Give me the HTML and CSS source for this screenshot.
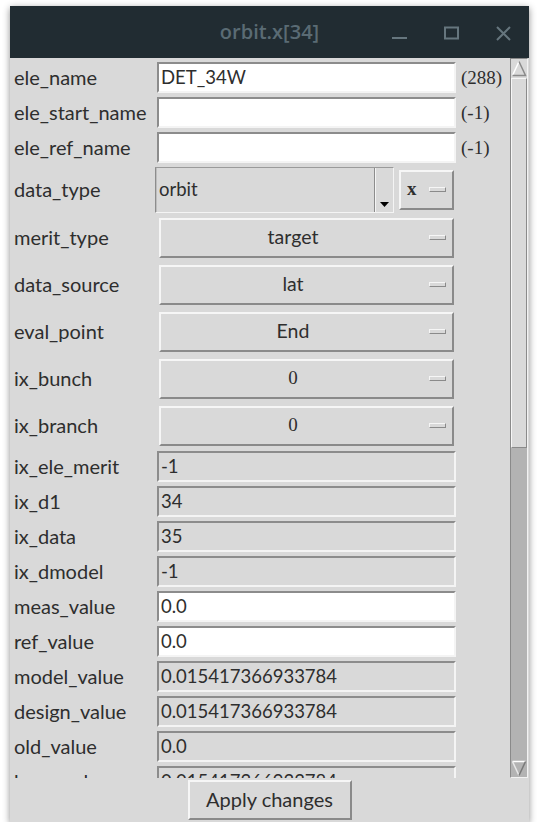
FILE: index.html
```html
<!DOCTYPE html>
<html>
<head>
<meta charset="utf-8">
<link rel="stylesheet" href="styles.css">
</head>
<body>
<div class="window">
  <div class="titlebar">
    <span></span>
    <span class="title">orbit.x[34]</span>
    <div class="controls">
      <svg class="ic" width="16" height="16" viewBox="0 0 16 16"><line x1="0" y1="12" x2="15" y2="12"/></svg>
      <svg class="ic" width="16" height="16" viewBox="0 0 16 16"><rect x="1" y="1.5" width="13" height="11"/></svg>
      <svg class="ic" width="16" height="16" viewBox="0 0 16 16"><path d="M1 1 L14 14 M14 1 L1 14"/></svg>
    </div>
  </div>
  <div class="content">
    <div class="pane">
      <div class="form">
        <div class="row r-entry"><span class="lbl">ele_name</span><div class="entry edit">DET_34W</div><span class="suffix">(288)</span></div>
        <div class="row r-entry"><span class="lbl">ele_start_name</span><div class="entry edit"></div><span class="suffix">(-1)</span></div>
        <div class="row r-entry"><span class="lbl">ele_ref_name</span><div class="entry edit"></div><span class="suffix">(-1)</span></div>
        <div class="row r-combo"><span class="lbl">data_type</span>
          <div class="combo-wrap">
            <div class="combo"><span class="combo-text">orbit</span><span class="combo-arrow"><svg width="9" height="5" viewBox="0 0 9 5"><path d="M0 0 H9 L4.5 5 Z" fill="#000"/></svg></span></div>
            <div class="mbtn small"><span class="mtext serif">x</span><span class="ind"></span></div>
          </div>
        </div>
        <div class="row r-btn"><span class="lbl">merit_type</span><div class="mbtn"><span class="mtext">target</span><span class="ind"></span></div></div>
        <div class="row r-btn"><span class="lbl">data_source</span><div class="mbtn"><span class="mtext">lat</span><span class="ind"></span></div></div>
        <div class="row r-btn"><span class="lbl">eval_point</span><div class="mbtn"><span class="mtext">End</span><span class="ind"></span></div></div>
        <div class="row r-btn"><span class="lbl">ix_bunch</span><div class="mbtn"><span class="mtext num">0</span><span class="ind"></span></div></div>
        <div class="row r-btn"><span class="lbl">ix_branch</span><div class="mbtn"><span class="mtext num">0</span><span class="ind"></span></div></div>
        <div class="row r-entry"><span class="lbl">ix_ele_merit</span><div class="entry ro">-1</div></div>
        <div class="row r-entry"><span class="lbl">ix_d1</span><div class="entry ro">34</div></div>
        <div class="row r-entry"><span class="lbl">ix_data</span><div class="entry ro">35</div></div>
        <div class="row r-entry"><span class="lbl">ix_dmodel</span><div class="entry ro">-1</div></div>
        <div class="row r-entry"><span class="lbl">meas_value</span><div class="entry edit">0.0</div></div>
        <div class="row r-entry"><span class="lbl">ref_value</span><div class="entry edit">0.0</div></div>
        <div class="row r-entry"><span class="lbl">model_value</span><div class="entry ro">0.015417366933784</div></div>
        <div class="row r-entry"><span class="lbl">design_value</span><div class="entry ro">0.015417366933784</div></div>
        <div class="row r-entry"><span class="lbl">old_value</span><div class="entry ro">0.0</div></div>
        <div class="row r-entry"><span class="lbl">base_value</span><div class="entry ro">0.015417366933784</div></div>
      </div>
      <div class="scrollbar">
        <div class="sb-up"><svg width="16" height="17" viewBox="0 0 16 17"><path d="M1.5 15.5 L8 1.5" stroke="#fff" stroke-width="1.5" fill="none"/><path d="M8 1.5 L14.5 15.5 H1.5" stroke="#8a8a8a" stroke-width="1.5" fill="none"/></svg></div>
        <div class="sb-thumb"></div>
        <div class="sb-trough"></div>
        <div class="sb-down"><svg width="16" height="17" viewBox="0 0 16 17"><path d="M1.5 1.5 H14.5" stroke="#fff" stroke-width="1.5" fill="none"/><path d="M1.5 1.5 L8 15.5" stroke="#e8e8e8" stroke-width="1.5" fill="none"/><path d="M14.5 1.5 L8 15.5" stroke="#7a7a7a" stroke-width="1.5" fill="none"/></svg></div>
      </div>
    </div>
    <div class="footer">
      <div class="apply">Apply changes</div>
    </div>
  </div>
</div>
</body>
</html>
```

FILE: styles.css
```css
* { box-sizing: border-box; }
body {
  margin: 0;
  background: #ffffff;
  font-family: Lato, "Open Sans", sans-serif;
}
.window {
  margin: 6px 0 0 10px;
  width: 519px;
  height: 816px;
  background: #d9d9d9;
  box-shadow: 0 2px 7px rgba(0, 0, 0, 0.45);
  display: flex;
  flex-direction: column;
}
.titlebar {
  height: 52px;
  flex: none;
  background: #212c32;
  display: grid;
  grid-template-columns: 1fr auto 1fr;
  align-items: center;
}
.title {
  font-family: "Open Sans", sans-serif;
  font-size: 20px;
  font-weight: 600;
  color: #5a6b74;
  padding-bottom: 2px;
}
.controls {
  justify-self: end;
  display: flex;
  align-items: center;
  gap: 36px;
  padding-right: 17px;
  padding-top: 3px;
}
.ic {
  stroke: #66767e;
  stroke-width: 2;
  fill: none;
}
.content {
  flex: 1;
  display: flex;
  flex-direction: column;
}
.pane {
  height: 720px;
  display: flex;
}
.form {
  width: 500px;
  overflow: hidden;
  padding-top: 2px;
}
.row {
  display: grid;
  grid-template-columns: 147px 299px 1fr;
  align-items: center;
  color: #2e2e2e;
  font-size: 18px;
}
.r-entry { height: 35px; }
.r-combo { height: 49px; }
.r-btn { height: 47px; }
.lbl {
  padding-left: 4px;
  padding-bottom: 2px;
  font-size: 20px;
  white-space: nowrap;
}
.entry {
  height: 31px;
  border: 2px solid;
  border-color: #8c8c8c #f4f4f4 #f4f4f4 #8c8c8c;
  padding-left: 2px;
  line-height: 26px;
  font-size: 18.5px;
  white-space: nowrap;
  overflow: hidden;
}
.edit { background: #ffffff; }
.ro { background: #d9d9d9; }
.suffix {
  font-family: "Liberation Serif", serif;
  font-size: 19px;
  padding-left: 5px;
}
.combo-wrap {
  display: flex;
  align-items: center;
  height: 100%;
}
.combo {
  margin-left: -2px;
  width: 239px;
  height: 46px;
  border: 1px solid;
  border-color: #9a9a9a #f4f4f4 #f4f4f4 #8c8c8c;
  box-shadow: inset 1px 0 0 #bdbdbd;
  display: flex;
  align-self: center;
}
.combo-text {
  flex: 1;
  padding-left: 3px;
  line-height: 42px;
  font-size: 18.5px;
}
.combo-arrow {
  width: 19px;
  border-left: 1px solid #8c8c8c;
  box-shadow: inset 1px 0 0 #f4f4f4;
  display: flex;
  align-items: flex-end;
  justify-content: center;
  padding-bottom: 5px;
}
.mbtn {
  margin-left: 2px;
  width: 295px;
  height: 40px;
  border: 2px solid;
  border-color: #f6f6f6 #8a8a8a #8a8a8a #f6f6f6;
  background: #d9d9d9;
  display: flex;
  align-items: center;
  font-size: 19.5px;
}
.mbtn.small {
  margin-left: 5px;
  width: 55px;
}
.mtext {
  flex: 1;
  text-align: center;
  padding-bottom: 2px;
}
.mbtn.small .mtext {
  text-align: left;
  padding-left: 6px;
}
.serif {
  font-family: "Liberation Serif", serif;
  font-weight: bold;
  font-size: 19px;
}
.num {
  font-family: "Liberation Serif", serif;
  font-size: 19px;
}
.ind {
  width: 17px;
  height: 5px;
  border: 1px solid;
  border-color: #f6f6f6 #8a8a8a #8a8a8a #f6f6f6;
  margin-right: 6px;
  margin-left: 4px;
}
.scrollbar {
  width: 18px;
  margin-right: 1px;
  border: 1px solid;
  border-color: #8a8a8a #f2f2f2 #f2f2f2 #8a8a8a;
  background: #b3b3b3;
  display: flex;
  flex-direction: column;
}
.sb-up {
  height: 19px;
  background: #d9d9d9;
  display: flex;
  align-items: center;
  justify-content: center;
}
.sb-thumb {
  height: 370px;
  background: #d9d9d9;
  border: 1px solid;
  border-color: #f6f6f6 #8a8a8a #8a8a8a #f6f6f6;
}
.sb-trough { flex: 1; }
.sb-down {
  height: 18px;
  display: flex;
  align-items: center;
  justify-content: center;
}
.footer {
  flex: 1;
  display: flex;
  justify-content: center;
  padding-top: 2px;
}
.apply {
  width: 164px;
  height: 40px;
  border: 2px solid;
  border-color: #f6f6f6 #8a8a8a #8a8a8a #f6f6f6;
  font-size: 20px;
  color: #2e2e2e;
  text-align: center;
  line-height: 34px;
}
```
